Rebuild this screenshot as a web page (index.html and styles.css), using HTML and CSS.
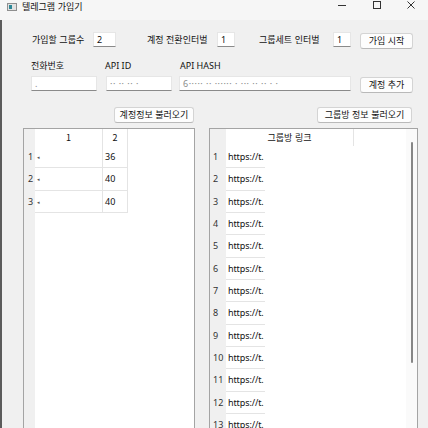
FILE: index.html
```html
<!DOCTYPE html>
<html lang="ko">
<head>
<meta charset="utf-8">
<title>텔레그램 가입기</title>
<link rel="stylesheet" href="styles.css">
</head>
<body>
<div class="titlebar">
  <svg class="appicon" width="10" height="8" viewBox="0 0 10 8"><rect x="0.5" y="0.5" width="9" height="7" fill="#e2e2e2" stroke="#8f8f8f"/><rect x="2" y="2" width="3" height="4" fill="#2d8796"/></svg>
  <span class="title">텔레그램 가입기</span>
  <div class="controls">
    <svg class="ctl ctl-min" width="8" height="10" viewBox="0 0 8 10"><line x1="0" y1="5.5" x2="8" y2="5.5" stroke="#333" stroke-width="1"/></svg>
    <svg class="ctl ctl-max" width="8" height="10" viewBox="0 0 8 10"><rect x="0.5" y="1.5" width="7" height="7" fill="none" stroke="#333" stroke-width="1"/></svg>
    <svg class="ctl ctl-close" width="8" height="10" viewBox="0 0 8 10"><path d="M0.5 1.5 L7.5 8.5 M7.5 1.5 L0.5 8.5" stroke="#333" stroke-width="1"/></svg>
  </div>
</div>
<div class="main">
  <div class="row1">
    <span class="lbl lbl-groups">가입할 그룹수</span>
    <div class="field f-groups">2</div>
    <span class="lbl lbl-switch">계정 전환인터벌</span>
    <div class="field f-small">1</div>
    <span class="lbl lbl-set">그룹세트 인터벌</span>
    <div class="field f-small">1</div>
    <div class="btn btn-start">가입 시작</div>
  </div>
  <div class="row2">
    <span class="lbl2 l-phone">전화번호</span>
    <span class="lbl2 l-apiid">API ID</span>
    <span class="lbl2 l-hash">API HASH</span>
  </div>
  <div class="row3">
    <div class="field f-phone"><span class="blur">.</span></div>
    <div class="field f-apiid"><span class="blur">·· ·· ·· ·</span></div>
    <div class="field f-hash"><span class="blur">6····· ·· ······ · ··· ·· ·· · ·</span></div>
    <div class="btn btn-add">계정 추가</div>
  </div>
  <div class="row4">
    <div class="btn btn-load1">계정정보 불러오기</div>
    <div class="btn btn-load2">그룹방 정보 불러오기</div>
  </div>
  <div class="tables">
    <div class="table t-left">
      <div class="rowhead rh-left">
        <div class="corner"></div>
        <div class="rnum">1</div>
        <div class="rnum">2</div>
        <div class="rnum">3</div>
      </div>
      <div class="data">
        <div class="hrow">
          <div class="hcell c1">1</div>
          <div class="hcell c2">2</div>
        </div>
        <div class="drow"><div class="cell c1"><span class="mark">◂</span></div><div class="cell c2">36</div></div>
        <div class="drow"><div class="cell c1"><span class="mark">◂</span></div><div class="cell c2">40</div></div>
        <div class="drow"><div class="cell c1"><span class="mark">◂</span></div><div class="cell c2">40</div></div>
      </div>
    </div>
    <div class="table t-right">
      <div class="rowhead rh-right">
        <div class="corner"></div>
        <div class="rnum">1</div>
        <div class="rnum">2</div>
        <div class="rnum">3</div>
        <div class="rnum">4</div>
        <div class="rnum">5</div>
        <div class="rnum">6</div>
        <div class="rnum">7</div>
        <div class="rnum">8</div>
        <div class="rnum">9</div>
        <div class="rnum">10</div>
        <div class="rnum">11</div>
        <div class="rnum">12</div>
        <div class="rnum">13</div>
      </div>
      <div class="data data-right">
        <div class="hrow">
          <div class="hcell clink">그룹방 링크</div>
        </div>
        <div class="lrow"><span class="link">https://t.</span></div>
        <div class="lrow"><span class="link">https://t.</span></div>
        <div class="lrow"><span class="link">https://t.</span></div>
        <div class="lrow"><span class="link">https://t.</span></div>
        <div class="lrow"><span class="link">https://t.</span></div>
        <div class="lrow"><span class="link">https://t.</span></div>
        <div class="lrow"><span class="link">https://t.</span></div>
        <div class="lrow"><span class="link">https://t.</span></div>
        <div class="lrow"><span class="link">https://t.</span></div>
        <div class="lrow"><span class="link">https://t.</span></div>
        <div class="lrow"><span class="link">https://t.</span></div>
        <div class="lrow"><span class="link">https://t.</span></div>
        <div class="lrow"><span class="link">https://t.</span></div>
      </div>
      <div class="vscroll"><div class="thumb"></div></div>
    </div>
  </div>
</div>
</body>
</html>
```
FILE: styles.css
```css
html, body {
  margin: 0;
  padding: 0;
}
body {
  width: 428px;
  height: 428px;
  overflow: hidden;
  background: #f0f0f0;
  font-family: "Noto Sans", "Noto Sans CJK KR", sans-serif;
  font-size: 9px;
  color: #111;
}

/* title bar */
.titlebar {
  height: 20px;
  background: #f6f6f6;
  display: flex;
  align-items: flex-start;
}
.appicon {
  margin: 3px 0 0 7px;
  flex: none;
}
.title {
  margin-left: 5px;
  margin-top: 1px;
  line-height: 12px;
  font-size: 9px;
  font-family: "Noto Sans CJK KR", sans-serif;
}
.controls {
  margin-left: auto;
  display: flex;
  padding-right: 13px;
}
.ctl { flex: none; display: block; }
.ctl-max { margin-left: 27px; }
.ctl-close { margin-left: 26px; }

/* main */
.main {
  border-left: 2px solid #5b5b5b;
  height: 408px;
  box-sizing: border-box;
  padding-top: 12px;
}

.lbl {
  line-height: 15px;
  font-family: "Noto Sans CJK KR", sans-serif;
  white-space: nowrap;
  flex: none;
}
.field {
  background: #fff;
  border: 1px solid #e6e6e6;
  border-bottom: 1px solid #8a8a8a;
  box-sizing: border-box;
  height: 15px;
  line-height: 13px;
  padding-left: 3px;
  flex: none;
  overflow: hidden;
  white-space: nowrap;
}
.btn {
  background: #fdfdfd;
  border: 1px solid #d4d4d4;
  border-bottom-color: #b9b9b9;
  border-radius: 3px;
  box-sizing: border-box;
  height: 16px;
  line-height: 14px;
  text-align: center;
  font-family: "Noto Sans CJK KR", sans-serif;
  white-space: nowrap;
  flex: none;
}

.row1 {
  display: flex;
  align-items: flex-start;
  height: 15px;
  padding-left: 30px;
}
.lbl-groups { width: 61px; }
.f-groups { width: 23px; }
.lbl-switch { width: 70px; margin-left: 31px; }
.f-small { width: 18px; }
.lbl-set { width: 74px; margin-left: 24px; }
.btn-start { width: 53px; margin-left: 9px; margin-top: 1px; }

.row2 {
  display: flex;
  margin-top: 12px;
  height: 14px;
  line-height: 14px;
  padding-left: 29px;
}
.lbl2 { flex: none; white-space: nowrap; }
.l-phone { width: 74px; font-family: "Noto Sans CJK KR", sans-serif; }
.l-apiid { width: 75px; }

.row3 {
  display: flex;
  align-items: flex-start;
  margin-top: 3px;
  height: 16px;
  padding-left: 29px;
}
.f-phone { width: 66px; }
.f-apiid { width: 66px; margin-left: 9px; }
.f-hash { width: 172px; margin-left: 7px; }
.btn-add { width: 53px; margin-left: 9px; margin-top: 1px; }
.blur { color: #8c8c8c; letter-spacing: 0.5px; }

.row4 {
  display: flex;
  margin-top: 15px;
  height: 16px;
  padding-left: 112px;
}
.btn-load1 { width: 80px; }
.btn-load2 { width: 95px; margin-left: 123px; }

/* tables */
.tables {
  display: flex;
  gap: 14px;
  margin-top: 5px;
  padding-left: 21px;
}
.table {
  border: 1px solid #a4a4a4;
  background: #fff;
  height: 320px;
  display: flex;
  box-sizing: border-box;
  flex: none;
}
.t-left { width: 172px; }
.t-right { width: 209px; }

.rowhead {
  background: #f0f0f0;
  flex: none;
}
.rh-left { width: 11px; }
.rh-right { width: 16px; }
.corner { height: 17px; }
.rnum {
  height: 22.33px;
  line-height: 22px;
  padding-left: 4px;
  color: #333;
}
.rh-right .rnum { padding-left: 3px; }

.data { flex: none; }
.data-right { width: 180px; }
.hrow { display: flex; height: 17px; }
.hcell {
  line-height: 17px;
  text-align: center;
  border-right: 1px solid #e4e4e4;
  box-sizing: border-box;
  font-family: "Noto Sans CJK KR", sans-serif;
}
.c1 { width: 68px; }
.c2 { width: 25px; }
.clink { width: 128px; }

.drow { display: flex; height: 22.33px; }
.cell {
  border-right: 1px solid #e4e4e4;
  border-bottom: 1px solid #e4e4e4;
  box-sizing: border-box;
  line-height: 21px;
  padding-left: 2px;
}
.mark { font-size: 5px; color: #555; vertical-align: 1px; }

.lrow { height: 22.33px; }
.link {
  display: block;
  width: 39px;
  height: 22.33px;
  box-sizing: border-box;
  border-bottom: 1px solid #e4e4e4;
  line-height: 21px;
  padding-left: 2px;
  white-space: nowrap;
  letter-spacing: -0.1px;
}

.vscroll {
  width: 11px;
  background: #fafafa;
  flex: none;
}
.thumb {
  width: 2px;
  height: 221px;
  margin-top: 13px;
  margin-left: 5px;
  background: #868686;
  border-radius: 1px;
}
```
